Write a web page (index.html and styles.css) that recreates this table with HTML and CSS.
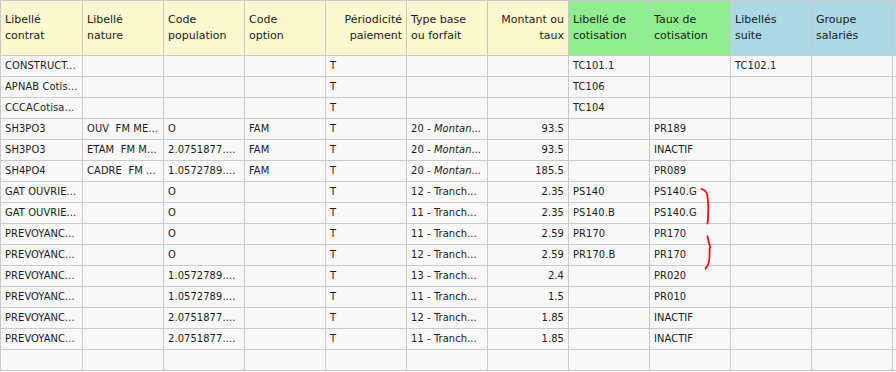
FILE: index.html
```html
<!DOCTYPE html>
<html lang="fr">
<head>
<meta charset="utf-8">
<title>Cotisations</title>
<link rel="stylesheet" href="styles.css">
</head>
<body>
<div class="wrap">
  <div class="grid">
    <div class="row head">
      <div class="c y">Libellé<br>contrat</div>
      <div class="c y">Libellé<br>nature</div>
      <div class="c y">Code<br>population</div>
      <div class="c y">Code<br>option</div>
      <div class="c y r">Périodicité<br>paiement</div>
      <div class="c y">Type base<br>ou forfait</div>
      <div class="c y r">Montant ou<br>taux</div>
      <div class="c g">Libellé de<br>cotisation</div>
      <div class="c g">Taux de<br>cotisation</div>
      <div class="c b">Libellés<br>suite</div>
      <div class="c b">Groupe<br>salariés</div>
      <div class="c b"></div>
    </div>
    <div class="row"><div class="c">CONSTRUCT...</div><div class="c"></div><div class="c"></div><div class="c"></div><div class="c">T</div><div class="c"></div><div class="c r"></div><div class="c">TC101.1</div><div class="c"></div><div class="c">TC102.1</div><div class="c"></div><div class="c"></div></div>
    <div class="row"><div class="c">APNAB Cotis...</div><div class="c"></div><div class="c"></div><div class="c"></div><div class="c">T</div><div class="c"></div><div class="c r"></div><div class="c">TC106</div><div class="c"></div><div class="c"></div><div class="c"></div><div class="c"></div></div>
    <div class="row"><div class="c">CCCA<span class="tight"> </span>Cotisa...</div><div class="c"></div><div class="c"></div><div class="c"></div><div class="c">T</div><div class="c"></div><div class="c r"></div><div class="c">TC104</div><div class="c"></div><div class="c"></div><div class="c"></div><div class="c"></div></div>
    <div class="row"><div class="c">SH3PO3</div><div class="c">OUV  FM ME...</div><div class="c">O</div><div class="c">FAM</div><div class="c">T</div><div class="c">20 - <i>Montan...</i></div><div class="c r">93.5</div><div class="c"></div><div class="c">PR189</div><div class="c"></div><div class="c"></div><div class="c"></div></div>
    <div class="row"><div class="c">SH3PO3</div><div class="c">ETAM  FM M...</div><div class="c">2.0751877....</div><div class="c">FAM</div><div class="c">T</div><div class="c">20 - <i>Montan...</i></div><div class="c r">93.5</div><div class="c"></div><div class="c">INACTIF</div><div class="c"></div><div class="c"></div><div class="c"></div></div>
    <div class="row"><div class="c">SH4PO4</div><div class="c">CADRE  FM ...</div><div class="c">1.0572789....</div><div class="c">FAM</div><div class="c">T</div><div class="c">20 - <i>Montan...</i></div><div class="c r">185.5</div><div class="c"></div><div class="c">PR089</div><div class="c"></div><div class="c"></div><div class="c"></div></div>
    <div class="row"><div class="c">GAT OUVRIE...</div><div class="c"></div><div class="c">O</div><div class="c"></div><div class="c">T</div><div class="c">12 - Tranch...</div><div class="c r">2.35</div><div class="c">PS140</div><div class="c">PS140.G</div><div class="c"></div><div class="c"></div><div class="c"></div></div>
    <div class="row"><div class="c">GAT OUVRIE...</div><div class="c"></div><div class="c">O</div><div class="c"></div><div class="c">T</div><div class="c">11 - Tranch...</div><div class="c r">2.35</div><div class="c">PS140.B</div><div class="c">PS140.G</div><div class="c"></div><div class="c"></div><div class="c"></div></div>
    <div class="row"><div class="c">PREVOYANC...</div><div class="c"></div><div class="c">O</div><div class="c"></div><div class="c">T</div><div class="c">11 - Tranch...</div><div class="c r">2.59</div><div class="c">PR170</div><div class="c">PR170</div><div class="c"></div><div class="c"></div><div class="c"></div></div>
    <div class="row"><div class="c">PREVOYANC...</div><div class="c"></div><div class="c">O</div><div class="c"></div><div class="c">T</div><div class="c">12 - Tranch...</div><div class="c r">2.59</div><div class="c">PR170.B</div><div class="c">PR170</div><div class="c"></div><div class="c"></div><div class="c"></div></div>
    <div class="row"><div class="c">PREVOYANC...</div><div class="c"></div><div class="c">1.0572789....</div><div class="c"></div><div class="c">T</div><div class="c">13 - Tranch...</div><div class="c r">2.4</div><div class="c"></div><div class="c">PR020</div><div class="c"></div><div class="c"></div><div class="c"></div></div>
    <div class="row"><div class="c">PREVOYANC...</div><div class="c"></div><div class="c">1.0572789....</div><div class="c"></div><div class="c">T</div><div class="c">11 - Tranch...</div><div class="c r">1.5</div><div class="c"></div><div class="c">PR010</div><div class="c"></div><div class="c"></div><div class="c"></div></div>
    <div class="row"><div class="c">PREVOYANC...</div><div class="c"></div><div class="c">2.0751877....</div><div class="c"></div><div class="c">T</div><div class="c">12 - Tranch...</div><div class="c r">1.85</div><div class="c"></div><div class="c">INACTIF</div><div class="c"></div><div class="c"></div><div class="c"></div></div>
    <div class="row"><div class="c">PREVOYANC...</div><div class="c"></div><div class="c">2.0751877....</div><div class="c"></div><div class="c">T</div><div class="c">11 - Tranch...</div><div class="c r">1.85</div><div class="c"></div><div class="c">INACTIF</div><div class="c"></div><div class="c"></div><div class="c"></div></div>
    <div class="row"><div class="c"></div><div class="c"></div><div class="c"></div><div class="c"></div><div class="c"></div><div class="c"></div><div class="c r"></div><div class="c"></div><div class="c"></div><div class="c"></div><div class="c"></div><div class="c"></div></div>
  </div>
  <svg class="marks" width="896" height="372" viewBox="0 0 896 372">
    <path d="M701.5 189 C705 190 707 192 707.5 196 C708.5 203 708.5 212 708 218 L707.5 223.5" />
    <path d="M707.5 236.5 C708 239 708.5 242 710 246.5 C709.5 250 709.5 254 709.5 258 C709 263 708 266 705.5 268.5" />
  </svg>
</div>
</body>
</html>
```

FILE: styles.css
```css
html, body {
  margin: 0;
  padding: 0;
  background: #f8f8f8;
}
body {
  width: 896px;
  height: 372px;
  overflow: hidden;
  font-family: "DejaVu Sans", Verdana, sans-serif;
  font-size: 11px;
  color: #1a1a1a;
}
.wrap {
  position: relative;
  width: 896px;
  height: 372px;
  overflow: hidden;
}
.grid {
  display: grid;
  grid-template-columns: 81px repeat(10, 80px) 80px;
  grid-template-rows: 54px repeat(15, 20px);
  gap: 1px;
  padding: 1px 0 1px 1px;
  width: max-content;
  background: #c9c9c9;
}
.row {
  display: contents;
}
.c {
  background: #f8f8f8;
  padding: 0 4px;
  line-height: 20px;
  white-space: pre;
  overflow: hidden;
  font-family: "DejaVu Sans Condensed", "DejaVu Sans", sans-serif;
  font-stretch: condensed;
  letter-spacing: 0.1px;
}
.head .c {
  display: flex;
  flex-direction: column;
  justify-content: center;
  line-height: 16px;
  white-space: normal;
  font-family: "DejaVu Sans", Verdana, sans-serif;
  font-stretch: normal;
  letter-spacing: 0;
}
.head .c.r {
  align-items: flex-end;
  text-align: right;
}
.c.r {
  text-align: right;
}
.y { background: #fdf8cf; }
.g { background: #90ee90; }
.b { background: #add8e6; }
.tight {
  letter-spacing: -3px;
}
i {
  font-style: italic;
}
.marks {
  position: absolute;
  left: 0;
  top: 0;
  pointer-events: none;
}
.marks path {
  fill: none;
  stroke: #f01010;
  stroke-width: 1.8;
  stroke-linecap: round;
}
```
